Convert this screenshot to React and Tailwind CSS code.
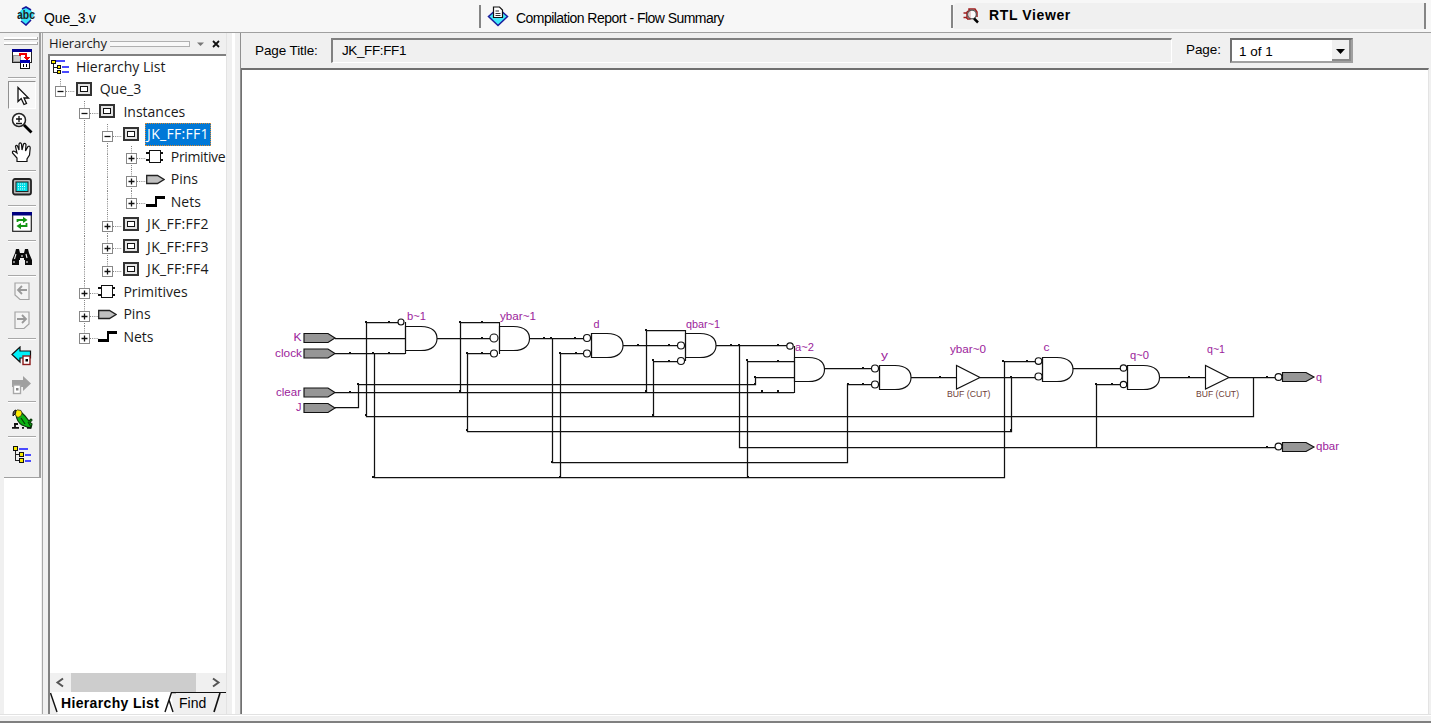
import React from "react";

const UI = "font-['Liberation_Sans',Arial,sans-serif]";
const TREE = "font-['Open_Sans','Noto_Sans',sans-serif]";

/* ---------- small icons ---------- */

function HierIcon() {
  return (
    <svg width="20" height="16" viewBox="0 0 20 16" shapeRendering="crispEdges" className="shrink-0">
      <path d="M3.5 4V13.5H8M3.5 8.5H8" fill="none" stroke="#222" />
      <g fill="#f7ea00" stroke="#111">
        <rect x="1.5" y="1.5" width="4" height="3" />
        <rect x="7.5" y="6.5" width="3" height="3" />
        <rect x="7.5" y="11.5" width="3" height="3" />
      </g>
      <path d="M6 2H15M12 8H19M12 13H19" stroke="#4a4aff" strokeWidth="2" />
    </svg>
  );
}

function NodeIcon({ kind }) {
  if (kind === "prim")
    return (
      <svg width="18" height="16" viewBox="0 0 18 16" shapeRendering="crispEdges">
        <path d="M0 5H3M0 12H3M14 5H17M14 12H17" stroke="#111" strokeWidth="2" />
        <rect x="3.500" y="2.500" width="11" height="12" fill="#fff" stroke="#111" strokeWidth="1.300" />
      </svg>
    );
  if (kind === "pin")
    return (
      <svg width="19" height="16" viewBox="0 0 19 16">
        <path d="M0.7 4.500H11.500L18 8.500L11.500 12.500H0.7Z" fill="#c0c0c0" stroke="#222" strokeWidth="1.300" />
      </svg>
    );
  if (kind === "net")
    return (
      <svg width="19" height="16" viewBox="0 0 19 16" shapeRendering="crispEdges">
        <path d="M0 12.500H10V4.500H19" fill="none" stroke="#000" strokeWidth="2.500" />
      </svg>
    );
  return (
    <svg width="16" height="16" viewBox="0 0 16 16" shapeRendering="crispEdges" className="ml-px">
      <rect x="1" y="2" width="14" height="12" fill="#e4e4e4" stroke="#333" strokeWidth="2" />
      <rect x="4.5" y="5.5" width="7" height="5" fill="#fff" stroke="#111" strokeWidth="1.2" />
    </svg>
  );
}

/* guide cell: up / down halves of the dotted trunk, and an optional expander */
function Guide({ up, down, box }) {
  return (
    <svg width="24" height="22.5" viewBox="0 0 24 22.5" className="-mr-[0.3px] shrink-0 overflow-visible">
      {up && <path d="M10.5 0V8" stroke="#808080" strokeDasharray="1 1.2" />}
      {down && <path d="M10.5 8V22.5" stroke="#808080" strokeDasharray="1 1.2" />}
      {box && (
        <g>
          <path d="M16 12.5H25" stroke="#808080" strokeDasharray="1 1.2" />
          <rect x="5.5" y="7.5" width="10" height="10" fill="#fff" stroke="#888" />
          <path d={box === "+" ? "M7.5 12.5H13.5M10.5 9.5V15.5" : "M7.5 12.5H13.5"} stroke="#111" strokeWidth="1.3" />
        </g>
      )}
    </svg>
  );
}

const rows = [
  { g: [["up", "-"]], icon: "inst", t: "Que_3" },
  { g: [null, ["both", "-"]], icon: "inst", t: "Instances" },
  { g: [null, ["both"], ["both", "-"]], icon: "inst", t: "JK_FF:FF1", sel: true },
  { g: [null, ["both"], ["both"], ["both", "+"]], icon: "prim", t: "Primitive", tight: true },
  { g: [null, ["both"], ["both"], ["both", "+"]], icon: "pin", t: "Pins" },
  { g: [null, ["both"], ["both"], ["up", "+"]], icon: "net", t: "Nets" },
  { g: [null, ["both"], ["both", "+"]], icon: "inst", t: "JK_FF:FF2", wide: true },
  { g: [null, ["both"], ["both", "+"]], icon: "inst", t: "JK_FF:FF3", wide: true },
  { g: [null, ["both"], ["up", "+"]], icon: "inst", t: "JK_FF:FF4", wide: true },
  { g: [null, ["both", "+"]], icon: "prim", t: "Primitives" },
  { g: [null, ["both", "+"]], icon: "pin", t: "Pins" },
  { g: [null, ["up", "+"]], icon: "net", t: "Nets" },
];

function TreeRow({ r }) {
  return (
    <div className="flex h-[22.5px] items-center whitespace-nowrap">
      {r.g.map((c, i) => (
        <Guide key={i} up={!!c} down={!!c && c[0] === "both"} box={c && c[1]} />
      ))}
      <div className="flex w-[24px] shrink-0 items-center pb-0.5 pl-px">
        <NodeIcon kind={r.icon} />
      </div>
      {r.sel ? (
        <span className="-my-1 flex h-[23px] w-[66px] items-center border border-dotted border-[#e08a2c] bg-[#0078d7] pb-0.5 pl-px tracking-[0.28px] text-white">
          {r.t}
        </span>
      ) : (
        <span className={`pb-0.5 pl-0.5 ${r.tight ? "tracking-[-0.35px]" : r.wide ? "tracking-[0.28px]" : ""}`}>{r.t}</span>
      )}
    </div>
  );
}

/* ---------- toolbar ---------- */

function Tool({ h, children }) {
  return <div className={`flex shrink-0 items-center justify-center ${h}`}>{children}</div>;
}
function Sep() {
  return <div className="mx-auto h-0.5 w-[28px] shrink-0 border-b border-white bg-[#a8a8a8]" />;
}

function Toolbar() {
  return (
    <div className="flex h-[445px] flex-col border-b border-r-2 border-[#a0a0a0] bg-[#f0f0f0]">
      <div className="mt-1 h-[3px] w-[34px] shrink-0 border-b border-r border-[#a8a8a8] bg-white" />
      <div className="mt-0.5 h-[3px] w-[34px] shrink-0 border-b border-r border-[#a8a8a8] bg-white" />
      <Tool h="h-[32px] pb-1">
        <svg width="22" height="22" viewBox="0 0 22 22" shapeRendering="crispEdges">
          <rect x="1.500" y="1.500" width="19" height="13" fill="#fff" stroke="#222" />
          <rect x="1" y="1" width="20" height="3" fill="#000090" />
          <rect x="2" y="7" width="7" height="6" fill="#ccc" stroke="#999" />
          <path d="M9 8V6H15V10" fill="none" stroke="#f00000" strokeWidth="1.600" />
          <path d="M12 9H20L16 12.500Z" fill="#f00000" />
          <rect x="9.500" y="13.500" width="9" height="7" fill="#fff" stroke="#111" />
          <rect x="9" y="12" width="10" height="3" fill="#0000b0" />
          <path d="M12.500 16V19M15.500 16V19" stroke="#000" />
        </svg>
      </Tool>
      <Sep />
      <div className="mx-auto mt-[2px] flex h-[28px] w-[28px] shrink-0 items-center justify-center border border-b-white border-l-[#909090] border-r-white border-t-[#909090] bg-[#f8f8f8]">
        <svg width="16" height="20" viewBox="0 0 16 20" className="ml-0.5 mt-0.5">
          <path d="M3 1.500V15.500L6.200 12.500L9 18.500L11.500 17.500L9 12H13.500Z" fill="#fff" stroke="#111" strokeWidth="1.300" />
        </svg>
      </div>
      <Tool h="h-[29px] pb-px">
        <svg width="22" height="22" viewBox="0 0 22 22">
          <circle cx="8" cy="8" r="6.500" fill="#fff" stroke="#222" strokeWidth="1.500" />
          <path d="M8 4V10M5 7H11M5 11.500H11" stroke="#111" strokeWidth="1.300" />
          <path d="M13 13L20.500 20.500" stroke="#000" strokeWidth="2.800" />
        </svg>
      </Tool>
      <Tool h="h-[29px] pb-px">
        <svg width="22" height="22" viewBox="0 0 22 22">
          <path
            d="M6 20.500V17L1.500 12Q1 9.500 4 10.500L6 12L4.500 5.500Q5 3.500 6.500 5L8 9L8 3Q9.200 0.800 10.500 3L11 9L12.500 3Q14 1.500 15 3.500L14.500 10L17 5.500Q19.200 4.500 19.200 7L18.500 14L16 18V20.500Z"
            fill="#fff"
            stroke="#111"
            strokeWidth="1.200"
          />
        </svg>
      </Tool>
      <div className="h-[3px] shrink-0" />
      <Sep />
      <Tool h="h-[33px] pb-[4px]">
        <svg width="20" height="18" viewBox="0 0 20 18">
          <rect x="1" y="1" width="18" height="15.500" rx="2" fill="#b8b8b8" stroke="#222" strokeWidth="1.800" />
          <rect x="4" y="4" width="12" height="9.500" fill="#00e0e8" stroke="#222" />
          <path d="M6 6H14M6 8.500H14M6 11H14" stroke="#d8ffff" strokeDasharray="1 1" />
        </svg>
      </Tool>
      <Sep />
      <Tool h="h-[33px] pb-[4px]">
        <svg width="20" height="20" viewBox="0 0 20 20">
          <rect x="0.700" y="0.700" width="18.600" height="18.600" fill="#fff" stroke="#222" strokeWidth="1.200" />
          <rect x="0" y="0" width="20" height="3.500" fill="#000080" />
          <path d="M5.500 10V8H12M14.500 11V14H8" fill="none" stroke="#149614" strokeWidth="1.800" />
          <path d="M11 4.800L15.500 8L11 11ZM9 11L4.500 14L9 17.200Z" fill="#149614" />
        </svg>
      </Tool>
      <Sep />
      <Tool h="h-[33px] pb-[4px]">
        <svg width="20" height="18" viewBox="0 0 20 18">
          <path d="M4 1H7L8 5H12L13 1H16L17 5L20 12V17H13V12H12V10H8V12H7V17H0V12L3 5Z" fill="#0a0a0a" />
          <path d="M4 6L2.500 11M14 6L15 10M10 7V9M2 13V15M15 13V15" stroke="#eee" strokeWidth="1.100" />
        </svg>
      </Tool>
      <Sep />
      <Tool h="h-[32px] pb-[4px]">
        <svg width="18" height="19" viewBox="0 0 18 19">
          <path d="M2 1H16V17.500H7L2 13Z" fill="#f4f4f4" stroke="#a4a4a4" strokeWidth="1.200" />
          <path d="M14 8H5M9 4L5 8L9 12" fill="none" stroke="#999" strokeWidth="1.800" />
        </svg>
      </Tool>
      <Tool h="h-[27px] pb-[5px]">
        <svg width="18" height="19" viewBox="0 0 18 19">
          <path d="M2 1H16V13L11 17.500H2Z" fill="#f4f4f4" stroke="#a4a4a4" strokeWidth="1.200" />
          <path d="M4 8H13M9 4L13 8L9 12" fill="none" stroke="#999" strokeWidth="1.800" />
        </svg>
      </Tool>
      <div className="h-0.5 shrink-0" />
      <Sep />
      <Tool h="h-[33px] pb-0.5">
        <svg width="21" height="20" viewBox="0 0 21 20">
          <path d="M1 8.500L9 1V5H19.500V12H9V16Z" fill="#00f0f8" stroke="#111" strokeWidth="1.200" />
          <rect x="12" y="10" width="7" height="8.500" fill="#fff" stroke="#8b1a1a" strokeWidth="1.400" />
          <rect x="14.500" y="13" width="2.500" height="2.500" fill="#000" />
        </svg>
      </Tool>
      <Tool h="h-[27px] pb-1">
        <svg width="21" height="20" viewBox="0 0 21 20">
          <path d="M20 8.500L12 1V5H1V12H12V16Z" fill="#a0a0a0" />
          <rect x="2.500" y="10" width="7" height="8.500" fill="#fff" stroke="#a8a8a8" strokeWidth="1.400" />
          <rect x="5" y="13" width="2.500" height="2.500" fill="#888" />
        </svg>
      </Tool>
      <div className="h-px shrink-0" />
      <Sep />
      <Tool h="h-[33px] pb-0.5">
        <svg width="22" height="22" viewBox="0 0 22 22">
          <path d="M5 7L10 4L14 8L18 13L20 11L21 12L19 14.500L21 16L20 20L16 19L11 17Q6 14 5 7Z" fill="#0cb414" stroke="#0a3a0a" strokeWidth="1.200" />
          <path d="M3.500 4Q6 0.500 10 2.500Q12 5 10 8L7 9.500L5 8Z" fill="#ffee00" stroke="#333" strokeWidth="0.800" />
          <path d="M5 2Q1.500 2.500 2 8L4.500 5.500Z" fill="#555" stroke="#111" />
          <path d="M10 10L14 16M17 14L20 19" stroke="#063f06" strokeWidth="1.200" />
          <path d="M1 19.800H8M3 16H7M4 16V19M11 19.800H13M16 19.800H20" stroke="#111" strokeWidth="1.800" />
        </svg>
      </Tool>
      <Sep />
      <Tool h="h-[34px] pb-0.5">
        <svg width="20" height="20" viewBox="0 0 20 20" shapeRendering="crispEdges">
          <path d="M3.500 4V16.500H8M3.500 10.500H8" fill="none" stroke="#222" />
          <g fill="#f7ea00" stroke="#111">
            <rect x="1.500" y="2.500" width="4" height="4" />
            <rect x="7.500" y="8.500" width="4" height="4" />
            <rect x="7.500" y="14.500" width="4" height="4" />
          </g>
          <path d="M7 5H16M13 11H19M13 17H19" stroke="#4a4aff" strokeWidth="2" />
        </svg>
      </Tool>
    </div>
  );
}

/* ---------- schematic ---------- */

const wires = [
  "M335 338.500H405", "M335 353.500H405", "M335 392.500H794", "M335 407.500H358.500V384.500H755.500V377.500H794",
  "M398 322.500H366.500V416.500H1253.500V377.500", "M374.500 353.500V477.500H1004.500V361.500H1036",
  "M437 338.500H491", "M460.500 392.500V322.500H499", "M491 353.500H467.500V431.500H1011.500V377.500",
  "M529 338.500H584", "M552.500 338.500V462.500H847.500V384.500H872", "M584 353.500H560.500V477.500",
  "M623 345.500H678", "M646.500 392.500V330.500H685", "M678 361.500H653.500V416.500",
  "M716 345.500H787", "M739.500 345.500V447.500H1275", "M794 361.500H747.500V477.500",
  "M824 368.500H872", "M911 377.500H957", "M980 377.500H1036", "M1073 368.500H1121",
  "M1121 384.500H1096.500V447.500", "M1159 377.500H1205", "M1229 377.500H1275",
];
/* left, body top, right apex, stem top, stem bottom */
const gates = [
  [405.5, 326.5, 437, 322, 354], [499.5, 326.5, 529.5, 322, 354], [591.5, 333.5, 623, 333.5, 357.5],
  [685.5, 333.5, 716, 330, 361], [794.5, 357.5, 824.5, 346, 393], [879.5, 365.5, 911, 365.5, 389],
  [1042.5, 357.5, 1073, 357.5, 381.5], [1127.5, 365.5, 1159.5, 365.5, 389],
];
const bubbles = [
  [401, 322, 3], [494, 338, 4], [494, 353.5, 3.5], [587, 338, 3.5], [587, 353.5, 3.5], [681, 345.5, 3.5],
  [681, 361, 3.5], [790, 346, 3.2], [875, 368.5, 3.5], [875, 384.5, 3.5], [1038.5, 361, 3.3],
  [1038.5, 376.5, 3.5], [1123.5, 368, 3.2], [1123.5, 384.5, 3.2], [1278.5, 377, 3.4], [1278.5, 446.5, 3.4],
];
const dots = [
  [366, 322], [389, 322], [350, 353], [373, 353], [389, 353], [350, 392], [358, 384], [366, 415], [373, 477],
  [460, 322], [482, 322], [482, 338], [467, 353], [482, 353], [460, 391], [467, 430], [544, 338], [551, 338], [575, 338],
  [560, 353], [576, 353], [552, 462], [560, 477], [638, 345], [646, 330], [669, 345], [653, 360], [669, 361], [646, 391],
  [653, 415], [731, 345], [739, 345], [778, 345], [747, 360], [778, 361], [755, 377], [755, 384], [762, 391], [778, 391],
  [748, 477], [848, 384], [863, 368], [863, 384], [940, 377], [1003, 361], [1011, 377], [1027, 361], [1011, 430],
  [1096, 384], [1112, 384], [1189, 377], [1267, 377], [1267, 447],
];
const labels = [
  ["K", 293.5, 341, 8], ["clock", 275, 356.5, 27], ["clear", 276, 395.5, 25], ["J", 296, 411, 5.5],
  ["b~1", 407, 319.5, 19], ["ybar~1", 500, 319.5, 36], ["d", 593.5, 327.5, 6], ["qbar~1", 686, 327.5, 34],
  ["a~2", 795, 350.5, 19], ["y", 881, 359, 7], ["ybar~0", 950, 352.5, 36], ["c", 1043.5, 351, 6],
  ["q~0", 1130, 358.5, 19], ["q~1", 1207, 352.5, 18], ["q", 1316, 380.5, 6], ["qbar", 1316, 450, 23],
];

function Schematic() {
  return (
    <svg width="1186" height="643" viewBox="242 70 1186 643" className="block">
      <g fill="none" stroke="#111" strokeWidth="1.250">
        {wires.map((d) => <path key={d} d={d} />)}
      </g>
      <g fill="#111">
        {dots.map(([x, y]) => <rect key={`${x},${y}`} x={x - 1} y={y - 1} width="2" height="2" />)}
      </g>
      <g fill="#fff" stroke="#111" strokeWidth="1.150">
        {gates.map(([l, t, r, s, e]) => (
          <g key={l}>
            <path d={`M${l} ${t}H${r - 16}C${r - 4} ${t} ${r} ${t + 6} ${r} ${t + 12}C${r} ${t + 18} ${r - 4} ${t + 24} ${r - 16} ${t + 24}H${l}Z`} />
            <path d={`M${l} ${s}V${e}`} />
          </g>
        ))}
        {bubbles.map(([x, y, r]) => <circle key={`${x},${y}`} cx={x} cy={y} r={r} />)}
        <path d="M956.500 365.500V389L980 377.500Z" />
        <path d="M1205.500 365.500V389L1229 377.500Z" />
      </g>
      <g fill="#969696" stroke="#111" strokeWidth="1.150">
        {[338, 353.5, 392.5, 408].map((y) => <path key={y} d={`M304 ${y - 4.5}H328L335 ${y}L328 ${y + 4.5}H304Z`} />)}
        {[377, 447].map((y) => <path key={y} d={`M1282.500 ${y - 4.5}H1306L1314 ${y}L1306 ${y + 4.5}H1282.500Z`} />)}
      </g>
      <g className="font-['Liberation_Sans',Arial,sans-serif]" fontSize="11.500" fill="#9b1c9b">
        {labels.map(([t, x, y, w]) => (
          <text key={t} x={x} y={y} textLength={w} lengthAdjust="spacingAndGlyphs">{t}</text>
        ))}
      </g>
      <g className="font-['Liberation_Sans',Arial,sans-serif]" fontSize="8.500" fill="#6e4038">
        <text x="947" y="397" textLength="43.500" lengthAdjust="spacingAndGlyphs">BUF (CUT)</text>
        <text x="1196" y="397" textLength="43" lengthAdjust="spacingAndGlyphs">BUF (CUT)</text>
      </g>
    </svg>
  );
}

/* ---------- tabs ---------- */

function Tabs() {
  return (
    <div className="flex h-[33px] shrink-0 border-b border-[#a0a0a0] bg-[#f7f7f7] pl-[10px] text-[14px] text-black">
      <div className="mb-1 mt-[5px] flex w-[471px] items-center border-r-2 border-[#858585] pl-[6px]">
        <svg width="20" height="20" viewBox="0 0 20 20" className="-mt-px">
          <path d="M10 1L15 4L18 9L14 15L10 19L6 15L2 9L5 4Z" fill="#35e4f8" />
          <path d="M6 3L10 1L15 4M5 15L10 19L15 14" fill="none" stroke="#17179a" strokeWidth="1.600" />
          <text x="1" y="12.500" fontSize="12" fontWeight="bold" textLength="18" lengthAdjust="spacingAndGlyphs" fill="#222" className="font-['Liberation_Sans',Arial,sans-serif]">abc</text>
        </svg>
        <span className="ml-[8px] mt-[3px] tracking-[-0.15px]">Que_3.v</span>
      </div>
      <div className="mb-1 mt-[5px] flex w-[472px] items-center border-r-2 border-[#858585] pl-[6px]">
        <svg width="22" height="21" viewBox="0 0 22 21">
          <path d="M11 2L20.500 10.500L11 19.500L1.500 10.500Z" fill="#42eafa" stroke="#1c1c9c" strokeWidth="1.500" />
          <path d="M6.500 1H12.500L15.500 4V11.500H6.500Z" fill="#fff" stroke="#111" strokeWidth="1.200" />
          <path d="M8.500 5H12M8.500 7.500H13.500M8.500 9.500H13.500" stroke="#333" />
        </svg>
        <span className="ml-[7px] mt-[3px] whitespace-nowrap tracking-[-0.54px]">Compilation Report - Flow Summary</span>
      </div>
      <div className="mb-[3px] ml-px mt-[3px] flex w-[472px] items-center rounded-tl-sm border-r-2 border-[#858585] bg-[#f0f0f0] pl-2">
        <svg width="18" height="18" viewBox="0 0 18 18">
          <path d="M5 4.500H8V12H5M5 6H1.500M5 10.500H1.500M5 4.500V12M7 4V2H13L15 5V10" fill="none" stroke="#a01c1c" strokeWidth="1.500" />
          <circle cx="10" cy="7.500" r="4.300" fill="#fff" fillOpacity="0.700" stroke="#555" strokeWidth="1.200" />
          <path d="M12 11.500L16 15.500" stroke="#000" strokeWidth="2.500" />
        </svg>
        <span className="-mt-px ml-[9px] text-[14px] font-bold tracking-[0.62px]">RTL Viewer</span>
      </div>
    </div>
  );
}

export default function App() {
  return (
    <div className={`flex h-[723px] w-[1431px] flex-col overflow-hidden bg-[#f0f0f0] ${UI}`}>
      <Tabs />
      <div className="flex h-[681px] shrink-0">
        <div className="w-[41px] bg-white pl-1 shadow-[inset_4px_0_0_#f0f0f0]">
          <Toolbar />
        </div>
        <div className="ml-px w-px bg-[#a8a8a8]" />
        <div className="flex w-[183px] flex-col pl-[5px]">
          <div className={`flex h-[21px] items-center text-[#1a1a1a] ${TREE}`}>
            <span className="ml-px text-[13px] tracking-[-0.1px]">Hierarchy</span>
            <div className="ml-[3px] h-[6px] w-[84px] border-y border-r border-[#b0b0b0] bg-[#f8f8f8]" />
            <svg width="30" height="10" viewBox="0 0 30 10" className="ml-[6px] shrink-0">
              <path d="M1 3.500H8L4.500 7Z" fill="#777" />
              <path d="M17 2L23 8M23 2L17 8" stroke="#111" strokeWidth="1.800" />
            </svg>
          </div>
          <div className="flex flex-1 flex-col overflow-hidden border-l-2 border-t-2 border-[#808080] bg-white">
            <div className={`flex-1 text-[14px] text-[#1a1a1a] ${TREE}`}>
              <div className="flex h-[22.500px] items-center">
                <HierIcon />
                <span className="ml-[6px] whitespace-nowrap pb-0.5">Hierarchy List</span>
              </div>
              {rows.map((r, i) => <TreeRow key={i} r={r} />)}
            </div>
            <div className="flex h-[19px] shrink-0 items-center bg-[#f0f0f0]">
              <svg width="21" height="12" viewBox="0 0 21 12">
                <path d="M13 1.500L7.500 5.500L13 9.500" fill="none" stroke="#555" strokeWidth="2" />
              </svg>
              <div className="h-[19px] w-[125px] bg-[#cdcdcd]" />
              <svg width="30" height="12" viewBox="0 0 30 12">
                <path d="M17 1.500L22.500 5.500L17 9.500" fill="none" stroke="#555" strokeWidth="2" />
              </svg>
            </div>
            <div className="flex h-[22px] shrink-0 text-[14px] text-black">
              <svg width="8" height="22" viewBox="0 0 8 22" className="shrink-0">
                <path d="M0 0V22H8L1 1Z" fill="#f0f0f0" />
                <path d="M0.500 1L7 20" stroke="#111" strokeWidth="1.400" />
              </svg>
              <span className="ml-[3px] mt-px w-[98px] shrink-0 whitespace-nowrap text-[14px] font-bold tracking-[0.34px]">Hierarchy List</span>
              <svg width="12" height="22" viewBox="0 0 12 22" className="ml-[5px] shrink-0">
                <path d="M8 1H12V22H9Z" fill="#f0f0f0" />
                <path d="M1 20L7.500 0.500H12M5 8L9 20" fill="none" stroke="#111" strokeWidth="1.400" />
              </svg>
              <div className="flex flex-1 border-t border-[#111] bg-[#f0f0f0]">
                <span className="ml-[3px]">Find</span>
                <svg width="9" height="20" viewBox="0 0 9 20" className="ml-[6px] shrink-0">
                  <path d="M2 19L8 0" stroke="#111" strokeWidth="1.600" />
                </svg>
              </div>
            </div>
          </div>
        </div>
        <div className="w-[14px] border-l border-[#e3e3e3] pl-[5px]">
          <div className="h-full w-[3px] bg-white" />
        </div>
        <div className="flex w-[1189px] flex-col border-l border-[#909090]">
          <div className="flex h-[35px] shrink-0 pl-[14px] text-[13.500px] text-black">
            <span className="mt-[8px] w-[76px] tracking-[-0.1px]">Page Title:</span>
            <div className="mt-[5px] h-[25px] w-[841px] border-b border-l-2 border-r border-t-2 border-b-white border-l-[#808080] border-r-white border-t-[#808080] pl-[9px] pt-px tracking-[-0.38px]">
              JK_FF:FF1
            </div>
            <span className="ml-[14px] mt-[7px] w-[44px] tracking-[-0.1px]">Page:</span>
            <div className="mt-[5px] flex h-[25px] w-[123px] border-2 border-b-[#a0a0a0] border-l-[#707070] border-r-[#a0a0a0] border-t-[#707070] bg-white pl-[7px]">
              <span className="flex-1 pt-0.5">1 of 1</span>
              <div className="flex w-[19px] items-center justify-center border-b-2 border-r-2 border-[#8a8a8a] bg-[#f0f0f0] pt-1">
                <svg width="9" height="5" viewBox="0 0 9 5"><path d="M0 0H9L4.500 5Z" fill="#000" /></svg>
              </div>
            </div>
          </div>
          <div className="h-[646px] border-l border-r border-t-2 border-l-[#707070] border-r-[#e3e3e3] border-t-[#707070] bg-white">
            <Schematic />
          </div>
        </div>
      </div>
      <div className="h-[9px] shrink-0">
        <div className="h-px bg-[#e2e2e2]" />
        <div className="h-[8px] border-b-2 border-t border-b-[#808080] border-t-white bg-[#f0f0f0]" />
      </div>
    </div>
  );
}
